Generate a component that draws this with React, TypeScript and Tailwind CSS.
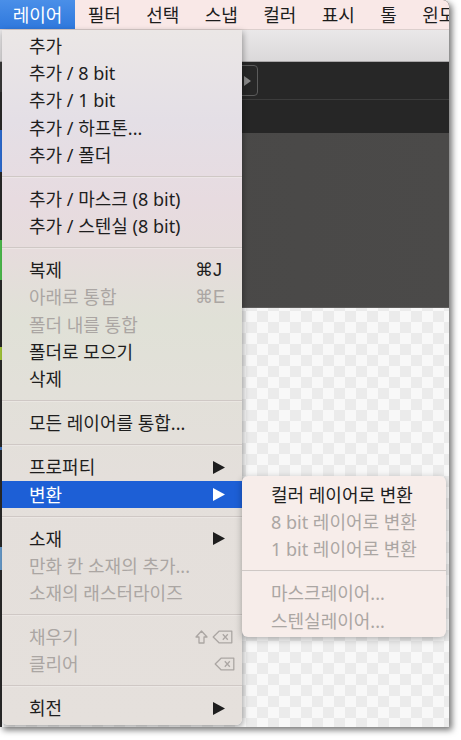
import React from 'react'

type Item = {
  label: string
  disabled?: boolean
  sub?: boolean
  active?: boolean
  keys?: 'cmdJ' | 'cmdE' | 'shiftDel' | 'del'
}

const groups: Item[][] = [
  [
    { label: '추가' },
    { label: '추가 / 8 bit' },
    { label: '추가 / 1 bit' },
    { label: '추가 / 하프톤...' },
    { label: '추가 / 폴더' },
  ],
  [{ label: '추가 / 마스크 (8 bit)' }, { label: '추가 / 스텐실 (8 bit)' }],
  [
    { label: '복제', keys: 'cmdJ' },
    { label: '아래로 통합', keys: 'cmdE', disabled: true },
    { label: '폴더 내를 통합', disabled: true },
    { label: '폴더로 모으기' },
    { label: '삭제' },
  ],
  [{ label: '모든 레이어를 통합...' }],
  [
    { label: '프로퍼티', sub: true },
    { label: '변환', sub: true, active: true },
  ],
  [
    { label: '소재', sub: true },
    { label: '만화 칸 소재의 추가...', disabled: true },
    { label: '소재의 래스터라이즈', disabled: true },
  ],
  [
    { label: '채우기', keys: 'shiftDel', disabled: true },
    { label: '클리어', keys: 'del', disabled: true },
  ],
  [{ label: '회전', sub: true }],
]

const subGroups: Item[][] = [
  [
    { label: '컬러 레이어로 변환' },
    { label: '8 bit 레이어로 변환', disabled: true },
    { label: '1 bit 레이어로 변환', disabled: true },
  ],
  [
    { label: '마스크레이어...', disabled: true },
    { label: '스텐실레이어...', disabled: true },
  ],
]

const menuBar = ['레이어', '필터', '선택', '스냅', '컬러', '표시', '톨', '윈도우']

function Arrow() {
  return (
    <svg width="12" height="13" viewBox="0 0 12 13" className="shrink-0">
      <polygon points="0,0 12,6.5 0,13" fill="currentColor" />
    </svg>
  )
}

function DeleteKey() {
  return (
    <svg width="21" height="14" viewBox="0 0 21 14" fill="none" stroke="currentColor" strokeWidth="1.3">
      <path d="M7 1.2 H19.8 V12.8 H7 L1.2 7 Z" strokeLinejoin="round" />
      <path d="M10.8 4.3 L15.8 9.7 M15.8 4.3 L10.8 9.7" />
    </svg>
  )
}

function ShiftKey() {
  return (
    <svg width="13" height="14" viewBox="0 0 13 14" fill="none" stroke="currentColor" strokeWidth="1.3">
      <path d="M6.5 1 L12 7 H9 V13 H4 V7 H1 Z" strokeLinejoin="round" />
    </svg>
  )
}

function Shortcut({ keys }: { keys: Item['keys'] }) {
  if (keys === 'cmdJ' || keys === 'cmdE')
    return (
      <span className="w-[47px] pr-[2px] font-['Liberation_Sans','DejaVu_Sans',sans-serif] text-[18px]">
        {keys === 'cmdJ' ? '⌘J' : '⌘E'}
      </span>
    )
  if (keys === 'shiftDel')
    return (
      <span className="w-[47px] flex items-center gap-[4px]">
        <ShiftKey />
        <DeleteKey />
      </span>
    )
  return (
    <span className="w-[47px] flex items-center pl-[19px]">
      <DeleteKey />
    </span>
  )
}

function Separator() {
  return (
    <div className="h-[16.7px] flex flex-col justify-center">
      <div className="h-px bg-[#cfc8c5]" />
      <div className="h-px bg-[#f2eeec]/50" />
    </div>
  )
}

function Row({ item, padLeft }: { item: Item; padLeft: string }) {
  const color = item.active
    ? 'bg-[#1d5fd6] text-white'
    : item.disabled
      ? 'text-[#aba6a3]'
      : 'text-[#1e1e1e]'
  return (
    <div className={`h-[27.3px] flex items-center ${padLeft} ${color}`}>
      <span className="flex-1 whitespace-nowrap">{item.label}</span>
      {item.keys && <Shortcut keys={item.keys} />}
      {item.sub && (
        <span className="pr-[17px]">
          <Arrow />
        </span>
      )}
    </div>
  )
}

export default function App() {
  return (
    <div className="w-[461px] h-[740px] bg-white font-['Noto_Sans','Noto_Sans_CJK_KR',sans-serif] text-[18px] leading-none">
      <div className="relative w-[449px] h-[727px] rounded-tr-[6px] overflow-hidden shadow-[3px_3px_6px_rgba(0,0,0,0.55)] flex flex-col bg-[#262626]">
        {/* menu bar */}
        <div className="h-[30px] shrink-0 flex bg-[#f9e8e7] border-b border-[#dccfcd] text-[#1c1c1c]">
          {menuBar.map((m, i) => (
            <div
              key={m}
              className={`h-full flex items-center px-[12.7px] whitespace-nowrap ${
                i === 0 ? 'bg-[linear-gradient(180deg,#4a8fe8,#2f78dd)] text-white' : ''
              }`}
            >
              {m}
            </div>
          ))}
        </div>

        {/* toolbar */}
        <div className="h-[32px] shrink-0 bg-[linear-gradient(180deg,#eae8e9,#dad8d9)] border-b border-[#a9a7a8]" />

        <div className="flex-1 flex">
          {/* strip behind the menu */}
          <div className="w-[2px] flex flex-col bg-[#2a2a2a]">
            <div className="h-[30px] bg-[#3a3a3a]" />
            <div className="h-[38px]" />
            <div className="h-[42px] bg-[#2e6fd8]" />
            <div className="h-[68px]" />
            <div className="h-[40px] bg-[#4fc24f]" />
            <div className="h-[67px]" />
            <div className="h-[13px] bg-[#a8cc3a]" />
            <div className="h-[87px]" />
            <div className="h-[3px] bg-[#3f78c8]" />
            <div className="h-[97px]" />
            <div className="h-[23px] bg-[#6a9fd0]" />
            <div className="flex-1" />
          </div>

          <div className="flex-1 flex flex-col">
            <div className="h-[38px] shrink-0 bg-[#272727] border-b border-[#3c3c3c] flex items-center pl-[225px]">
              <div className="w-[31px] h-[31px] rounded-[4px] border border-[#5b5b5b] flex items-center pl-[16px]">
                <svg width="7" height="10" viewBox="0 0 7 10">
                  <polygon points="0,0 7,5 0,10" fill="#8a8a8a" />
                </svg>
              </div>
            </div>
            <div className="h-[33px] shrink-0 bg-[#262626]" />
            <div className="h-[175px] shrink-0 bg-[linear-gradient(90deg,#484746,#4b4a49)] border-b border-[#5f5e5d]" />
            <div className="flex-1 bg-[image:conic-gradient(#ebebeb_25%,#f8f8f8_0_50%,#ebebeb_0_75%,#f8f8f8_0)] bg-[length:22px_22px] bg-[position:2px_3px]" />
          </div>
        </div>

        {/* layer menu */}
        <div className="absolute left-[2px] top-[30px] w-[240px] pt-[2px] pb-[3px] rounded-b-[6px] bg-[linear-gradient(180deg,#ebe7e6_0px,#e4dfe6_90px,#e7dbe0_170px,#e6dcdc_220px,#e0e1d7_290px,#e2e0d9_360px,#e4dfdb_450px,#e5e0dc_696px)] shadow-[1px_2px_6px_rgba(0,0,0,0.35)]">
          {groups.map((g, gi) => (
            <div key={gi}>
              {gi > 0 && <Separator />}
              {g.map((it) => (
                <Row key={it.label} item={it} padLeft="pl-[27px]" />
              ))}
            </div>
          ))}
        </div>

        {/* convert submenu */}
        <div className="absolute left-[242px] top-[476px] w-[204px] pt-[5px] pb-[3px] rounded-[6px] bg-[#f7edea] shadow-[0_2px_7px_rgba(0,0,0,0.3)]">
          {subGroups.map((g, gi) => (
            <div key={gi}>
              {gi > 0 && <Separator />}
              {g.map((it) => (
                <Row key={it.label} item={it} padLeft="pl-[29px]" />
              ))}
            </div>
          ))}
        </div>
      </div>
    </div>
  )
}
